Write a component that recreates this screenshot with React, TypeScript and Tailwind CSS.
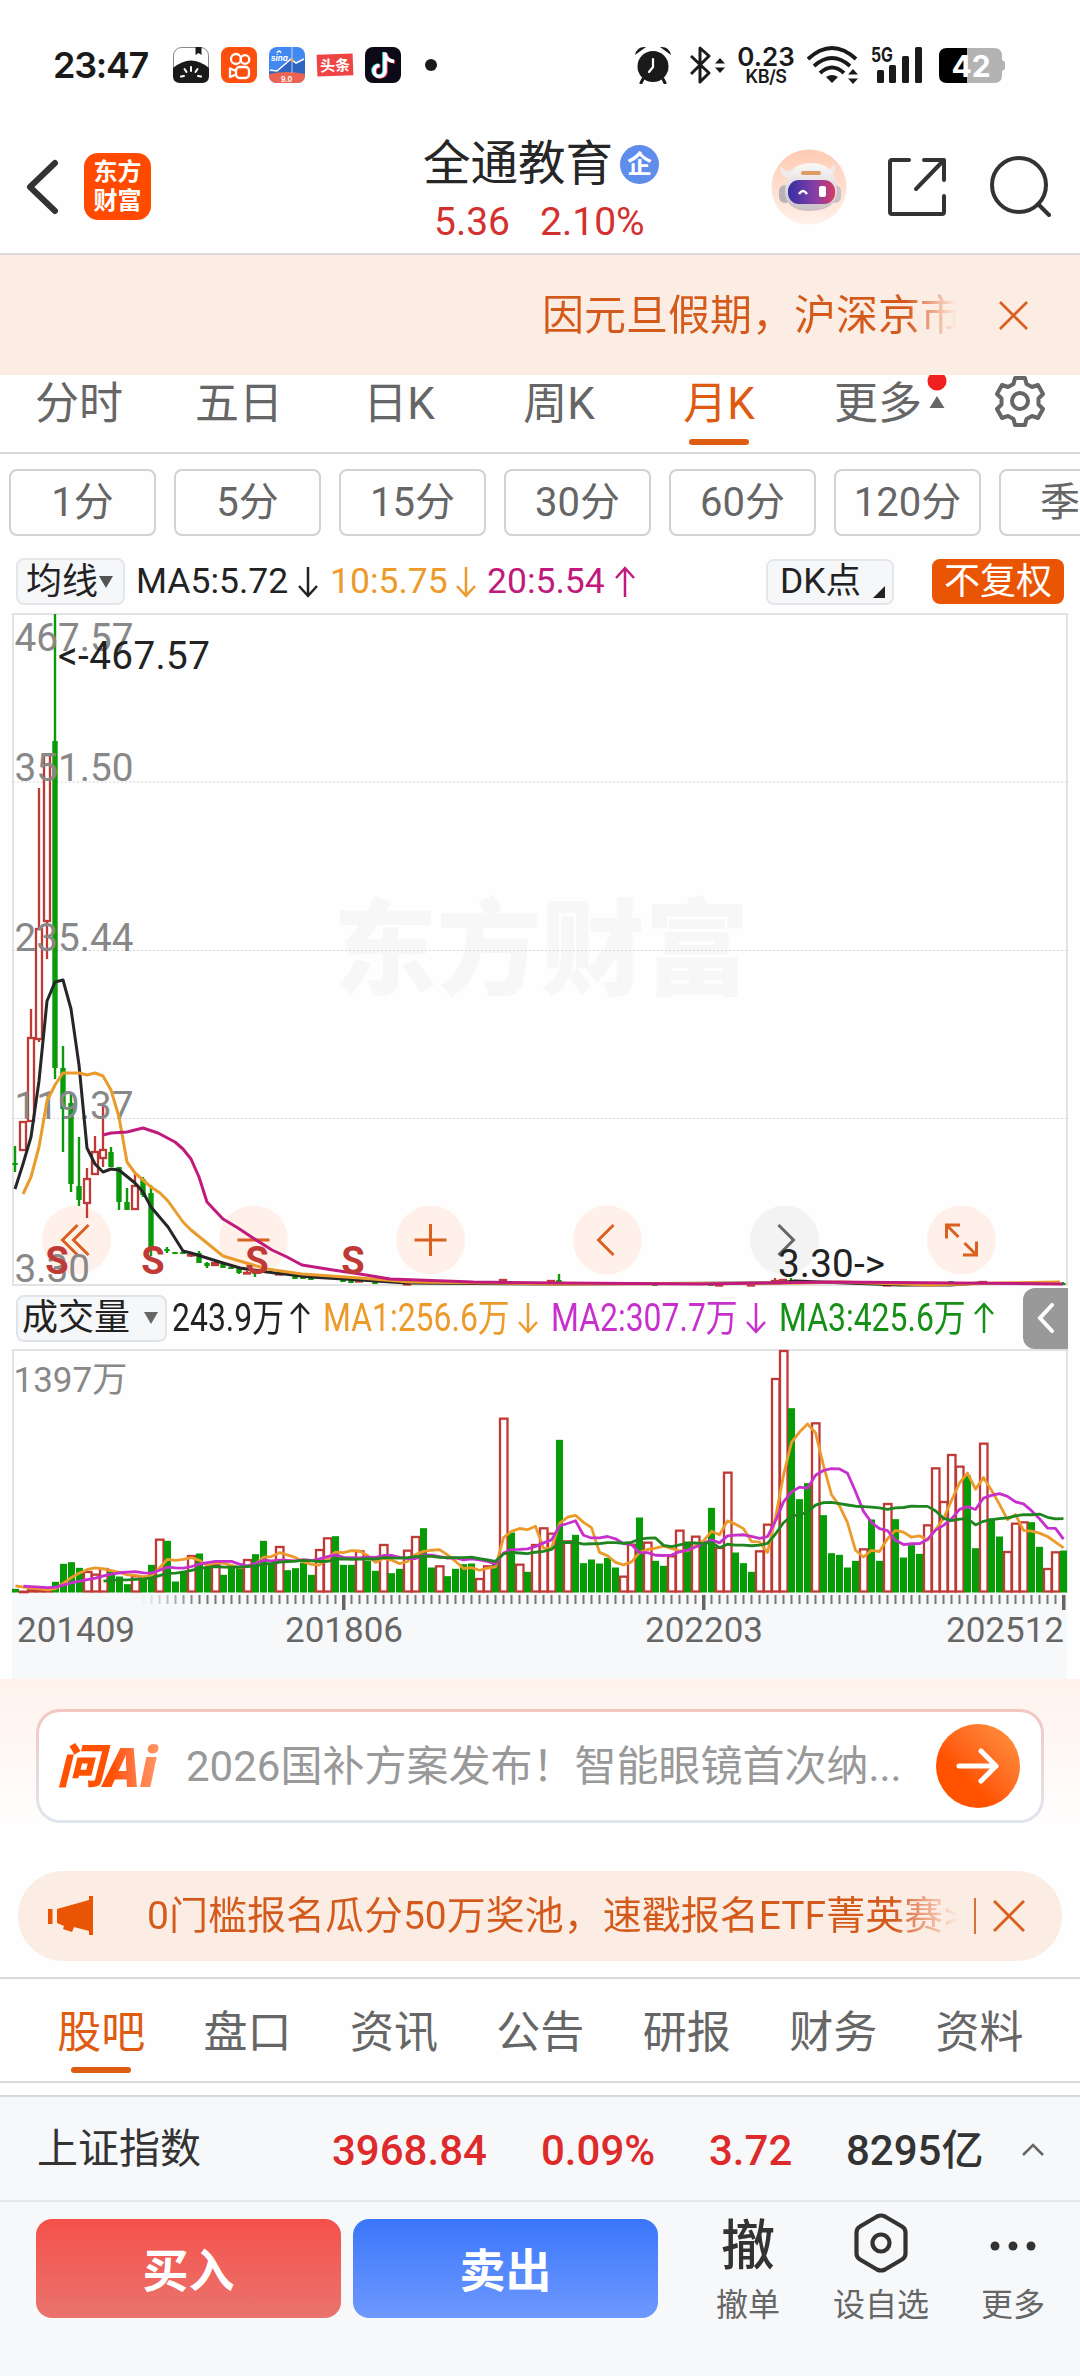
import type { ReactNode } from "react"
import clsx from "clsx"

const PERIODS = ["分时", "五日", "日K", "周K", "月K"]
const MINUTES = ["1分", "5分", "15分", "30分", "60分", "120分", "季K"]
const SECTIONS = ["股吧", "盘口", "资讯", "公告", "研报", "财务", "资料"]

const UP = "#bf3a37"
const DOWN = "#0a9a0a"

// x, high, low, body top, body bottom, rising
const CANDLES: [number, number, number, number, number, boolean][] = [
  [15, 1145, 1171, 1162, 1164, false],
  [23, 1120, 1150, 1120, 1150, true],
  [31, 1008, 1121, 1036, 1121, true],
  [39, 787, 1041, 927, 1039, true],
  [47, 753, 958, 753, 921, true],
  [55, 613, 1078, 740, 1067, false],
  [63, 1045, 1151, 1067, 1108, false],
  [71, 1092, 1191, 1102, 1183, false],
  [79, 1136, 1205, 1185, 1199, false],
  [87, 1167, 1217, 1177, 1203, true],
  [95, 1135, 1174, 1150, 1174, true],
  [103, 1105, 1166, 1148, 1158, true],
  [111, 1146, 1166, 1151, 1166, false],
  [119, 1166, 1209, 1166, 1201, false],
  [127, 1187, 1209, 1201, 1209, false],
  [135, 1173, 1209, 1184, 1209, true],
  [143, 1176, 1196, 1178, 1194, false],
  [151, 1184, 1255, 1192, 1247, false],
  [167, 1246, 1252, 1248, 1250, false],
  [175, 1251, 1253, 1251, 1253, false],
  [183, 1251, 1253, 1251, 1253, false],
  [191, 1253, 1256, 1253, 1255, true],
  [199, 1250, 1262, 1252, 1262, false],
  [207, 1261, 1267, 1262, 1265, false],
  [215, 1261, 1265, 1261, 1265, true],
  [223, 1263, 1267, 1263, 1267, false],
  [231, 1266, 1268, 1266, 1268, false],
  [239, 1268, 1273, 1268, 1272, false],
  [247, 1270, 1273, 1271, 1273, true],
  [255, 1271, 1276, 1271, 1273, false],
  [279, 1272, 1274, 1272, 1274, true],
  [295, 1275, 1278, 1275, 1278, false],
  [303, 1276, 1278, 1276, 1278, false],
  [311, 1277, 1279, 1277, 1279, false],
  [343, 1279, 1281, 1279, 1281, false],
  [351, 1279, 1282, 1280, 1282, false],
  [359, 1279, 1281, 1279, 1281, true],
  [375, 1281, 1283, 1281, 1283, false],
  [407, 1282, 1284, 1282, 1284, true],
  [503, 1278, 1281, 1278, 1281, true],
  [551, 1279, 1281, 1279, 1281, true],
  [559, 1273, 1281, 1279, 1281, false],
  [655, 1283, 1285, 1283, 1285, false],
  [711, 1283, 1285, 1283, 1285, false],
  [719, 1283, 1285, 1283, 1285, true],
  [751, 1283, 1285, 1283, 1285, true],
  [775, 1277, 1281, 1279, 1281, true],
  [783, 1278, 1280, 1278, 1280, true],
  [791, 1277, 1281, 1279, 1281, false],
  [887, 1283, 1285, 1283, 1285, true],
  [951, 1280, 1282, 1280, 1282, false],
  [983, 1280, 1282, 1280, 1282, true],
  [1063, 1281, 1284, 1282, 1284, false]
]

const MA5 =
  "15,1188 23,1163 31,1136 39,1080 47,1000 55,981 63,979 71,1008 79,1064 87,1147 95,1163 103,1171 111,1168 119,1169 135,1182 143,1191 151,1206 168,1226 183,1250 191,1252 207,1257 223,1262 240,1267 267,1271 310,1276 360,1279 407,1282 560,1283 780,1282 795,1280 820,1281 900,1284 950,1284 980,1282"
const MA10 =
  "23,1193 31,1176 39,1146 47,1100 55,1084 63,1072 79,1072 87,1074 95,1072 103,1075 111,1089 119,1116 127,1161 135,1172 151,1186 160,1192 168,1200 183,1221 191,1229 207,1242 223,1255 253,1264 267,1268 302,1273 360,1277 410,1281 560,1283 800,1282 840,1281 930,1284 1000,1282 1060,1281"
const MA20 =
  "103,1134 111,1132 127,1131 143,1127 158,1132 175,1141 183,1148 191,1158 199,1176 207,1201 223,1218 238,1227 253,1237 272,1249 287,1256 302,1264 333,1269 360,1273 390,1278 473,1281 560,1282 700,1283 830,1281 1063,1283"

// Monthly volume, negative where the month closed lower. 726 fills the plot.
const VOLUMES = [
  -11, 4, 8, 8, 8, -32, -86, -91, -74, 63, 55, 72, -63, -48, -25, 50, -50, -83, 160, -155, -33, -65,
  111, -117, -75, 83, -53, -80, -80, 99, -115, -155, -90, 138, -67, -73, -90, -53, 129, 164, -169,
  -83, -83, 125, -95, -65, 144, -58, -71, 127, 168, -193, -75, 80, -49, -71, -85, -87, 42, 80, -92,
  523, -180, 85, -62, 144, 194, 178, -458, 155, -173, -88, -99, -87, -104, -75, 49, 145, -225, 151,
  -95, -80, 110, 187, -153, 169, -155, -254, 135, 361, -120, -88, -62, 125, 205, 642, 726, -553,
  -280, -328, 509, -232, -118, -113, -75, -95, 131, -219, -95, 267, -220, -105, -142, -116, 203, 374,
  273, 414, 379, -351, -133, 448, -222, -168, 123, 208, 212, -211, -137, 72, 122, -126
]
const MONTH_PITCH = 8
const FIRST_MONTH_X = 15.5
const VOLUME_BASE = 1591.5

const monthX = (i: number) => FIRST_MONTH_X + i * MONTH_PITCH

function volumeAverage(days: number, from: number) {
  const padded = [...Array(20).fill(22), ...VOLUMES.map(Math.abs)]
  return VOLUMES.map((_, i) => {
    const slice = padded.slice(i + 21 - days, i + 21)
    const avg = slice.reduce((a, b) => a + b, 0) / days
    return `${monthX(i)},${VOLUME_BASE - avg / 3}`
  })
    .slice(from)
    .join(" ")
}

function Arrow({ up, className }: { up?: boolean; className?: string }) {
  return (
    <svg viewBox="0 0 20 32" className={clsx("h-8 w-5 shrink-0", className)} fill="none" stroke="currentColor" strokeWidth="2.5">
      <path d={up ? "M10 31V2M1 12l9-10 9 10" : "M10 1v29M1 20l9 10 9-10"} />
    </svg>
  )
}

function Close({ className }: { className?: string }) {
  return (
    <svg viewBox="0 0 30 30" className={className} fill="none" stroke="#d9601f" strokeWidth="2.8">
      <path d="M1 1l28 28M29 1L1 29" />
    </svg>
  )
}

function StatusBar() {
  return (
    <div className="flex h-[130px] items-center pl-[53px] font-['Inter','Noto_Sans_CJK_SC',sans-serif] text-[#1a1a1a]">
      <span className="w-[120px] text-[36px] leading-none font-semibold tracking-[-1.3px]">23:47</span>
      <div className="flex gap-3">
        <svg viewBox="0 0 36 36" className="size-9">
          <rect x=".5" y=".5" width="35" height="35" rx="8" fill="#fff" stroke="#555" strokeWidth=".7" />
          <path d="M0 21Q18 6 36 21v8q0 7-7 7H7q-7 0-7-7z" fill="#1a1a1a" />
          <path d="M22.500 0h6v8l-3-2-3 2z" fill="#1a1a1a" />
          <path d="M18 20v4M11.500 22l2 3M24.500 22l-2 3M8 29.500l3-.5M28 29.500l-3-.5" stroke="#fff" strokeWidth="2" strokeLinecap="round" />
        </svg>
        <svg viewBox="0 0 36 36" className="size-9">
          <rect width="36" height="36" rx="8" fill="#fd4f0d" />
          <g fill="none" stroke="#fff" strokeWidth="2.300">
            <circle cx="15" cy="12" r="5" />
            <circle cx="24" cy="12.500" r="4.300" />
            <rect x="15" y="20" width="13" height="11" rx="3.500" />
            <path d="M15 24l-6-2.500v8.500l6-2.500" strokeLinejoin="round" />
          </g>
        </svg>
        <svg viewBox="0 0 36 36" className="size-9">
          <rect width="36" height="36" rx="8" fill="#4188f0" />
          <path d="M0 25l9-1 9-10 5 0 4 3 9-5v15H0z" fill="#2f65c0" />
          <path d="M0 27q18-4 36 0v1q0 8-8 8H8q-8 0-8-8z" fill="#ea6353" />
          <path d="M1 23l7 1L22 12l5 4 8-4" fill="none" stroke="#fff" strokeWidth="1.500" />
          <path d="M23 0v26" stroke="#e6ecf5" strokeWidth=".8" />
          <circle cx="23" cy="13" r="1.600" fill="#f5a030" />
          <path d="M8 6q2-4 4 0" fill="none" stroke="#fff" strokeWidth="1.300" />
          <text x="2" y="14" fontSize="8" fontWeight="700" fontStyle="italic" fill="#fff">sina</text>
          <text x="12" y="34.500" fontSize="7" fontWeight="700" fill="#fff">9.0</text>
        </svg>
        <span className="flex h-[22px] w-9 -rotate-2 items-center justify-center self-center bg-[#ef4444] text-[15px] leading-none font-bold text-white">
          头条
        </span>
        <svg viewBox="0 0 36 36" className="size-9">
          <rect width="36" height="36" rx="8" fill="#0b0a16" />
          <g fill="none" strokeWidth="3.600">
            <path d="M19 5v19a5.500 5.500 0 1 1-5.500-6M19 6q1 7 9 8" stroke="#27e8e4" />
            <path d="M21 6v19a5.500 5.500 0 1 1-5.500-6M21 7q1 7 9 8" stroke="#fb2f57" />
            <path d="M20 5.500v19a5.500 5.500 0 1 1-5.500-6M20 6.500q1 7 9 8" stroke="#fff" />
          </g>
        </svg>
      </div>
      <span className="ml-6 size-3 rounded-full bg-[#1a1a1a]" />
      <svg viewBox="0 0 36 38" className="ml-[198px] h-[38px] w-9" fill="#1a1a1a">
        <circle cx="18" cy="20.500" r="15.500" />
        <path d="M0 9Q2 0 11 1zM36 9Q34 0 25 1z" />
        <path d="M8 33l-2 4M28 33l2 4" stroke="#1a1a1a" strokeWidth="3" strokeLinecap="round" />
        <path d="M18 13v8l-4 5" fill="none" stroke="#fff" strokeWidth="2.200" strokeLinecap="round" />
      </svg>
      <svg viewBox="0 0 36 38" className="ml-[19px] h-[38px] w-9" fill="none" stroke="#1a1a1a" strokeWidth="3" strokeLinejoin="round">
        <path d="M1 10l18 17-9 9V2l9 8L1 28" />
        <path d="M30 12l5 5.500H25zM30 27l5-5.500H25z" fill="#1a1a1a" stroke="none" />
      </svg>
      <div className="ml-[11px] w-[58px] pt-0.5 text-center font-semibold">
        <div className="text-[26px] leading-[22px]">0.23</div>
        <div className="text-[18px] leading-[18px] tracking-[-.5px]">KB/S</div>
      </div>
      <svg viewBox="0 0 52 38" className="ml-3 h-[38px] w-[52px]" fill="none" stroke="#1a1a1a" strokeWidth="3.800">
        <path d="M1 13Q25-9 49 13M7 20Q25 4 43 20M13 27Q25 16 37 27" />
        <path d="M19 31q6-4 12 0l-6 6z" fill="#1a1a1a" stroke="none" />
        <path d="M46 23l5 5.500H41zM46 38l5-5.500H41z" fill="#1a1a1a" stroke="none" />
      </svg>
      <svg viewBox="0 0 52 38" className="ml-[12px] h-[38px] w-[52px]" fill="#1a1a1a">
        <text x="0" y="16" fontSize="20" fontWeight="700" textLength="22" lengthAdjust="spacingAndGlyphs">5G</text>
        <rect x="6" y="24" width="7" height="13" rx="1.500" />
        <rect x="18" y="19" width="7" height="18" rx="1.500" />
        <rect x="31" y="10" width="7" height="27" rx="1.500" />
        <rect x="44" y="1" width="7" height="36" rx="1.500" />
      </svg>
      <svg viewBox="0 0 66 35" className="ml-4 h-[35px] w-[66px]">
        <path d="M28 0h27q8 0 8 8v4l3 2v7l-3 2v4q0 8-8 8H28z" fill="#b3b3b3" />
        <path d="M28 0H8Q0 0 0 8v19q0 8 8 8h20z" fill="#000" />
        <text x="32" y="28.500" fontSize="30" fontWeight="700" fill="#fff" textAnchor="middle">42</text>
      </svg>
    </div>
  )
}

function Header() {
  return (
    <header className="flex h-[125px] items-center border-b-2 border-[#d8d8da] pb-2.5 pl-[26px]">
      <svg viewBox="0 0 34 56" className="h-14 w-[34px]" fill="none" stroke="#333" strokeWidth="6" strokeLinecap="round" strokeLinejoin="round">
        <path d="M29 4L4 28l25 24" />
      </svg>
      <div className="ml-6 flex size-[67px] flex-col items-center justify-center rounded-[14px] bg-[#ff4a00] text-[24px] leading-[29px] font-bold text-white">
        <span>东方</span>
        <span>财富</span>
      </div>
      <div className="ml-[272px] w-[236px] pt-[13px]">
        <div className="flex items-center">
          <h1 className="text-[47.500px] leading-[58px] text-[#262626]">全通教育</h1>
          <span className="ml-[7px] flex size-[39px] items-center justify-center rounded-full bg-[#5f8deb] text-[25px] leading-none font-bold text-white">企</span>
        </div>
        <div className="flex gap-[30px] pl-[11px] text-[39px] leading-[58px] text-[#d3312f]">
          <span>5.36</span>
          <span>2.10%</span>
        </div>
      </div>
      <svg viewBox="0 0 76 76" className="ml-[112px] size-[76px]">
        <defs>
          <linearGradient id="halo" x2="0" y2="1">
            <stop stopColor="#ffcbb2" />
            <stop offset="1" stopColor="#fff1ea" />
          </linearGradient>
          <linearGradient id="visor">
            <stop stopColor="#3430a5" />
            <stop offset=".6" stopColor="#8a3fa5" />
            <stop offset="1" stopColor="#d93862" />
          </linearGradient>
          <linearGradient id="helmet" x2="0" y2="1">
            <stop stopColor="#fbf8f8" />
            <stop offset="1" stopColor="#c9c0c4" />
          </linearGradient>
        </defs>
        <circle cx="38" cy="38" r="37.500" fill="url(#halo)" />
        <path d="M18 29Q7 27 10 16q2 7 12 6zM58 27q9-3 5-13-2 7-10 7z" fill="#f0e9ea" />
        <rect x="8" y="36" width="12" height="18" rx="6" fill="#b9b2b6" />
        <rect x="58" y="36" width="12" height="18" rx="6" fill="#c7c0c4" />
        <path d="M14 42Q15 14 40 14t26 27q1 20-27 21-25 0-25-20z" fill="url(#helmet)" />
        <rect x="30" y="22" width="20" height="4" rx="2" fill="#dd9a66" />
        <rect x="17" y="31" width="47" height="24" rx="11" fill="url(#visor)" />
        <path d="M28 45q4-6 8 0" fill="none" stroke="#fff" strokeWidth="2.500" />
        <rect x="48" y="37" width="7" height="11" rx="2" fill="#fff" />
      </svg>
      <svg viewBox="0 0 60 60" className="ml-10 size-[60px]" fill="none" stroke="#333" strokeWidth="4" strokeLinecap="round" strokeLinejoin="round">
        <path d="M22 3H5Q3 3 3 5v50q0 2 2 2h50q2 0 2-2V39M37 3h20v20M57 3L29 32" />
      </svg>
      <svg viewBox="0 0 62 62" className="ml-[42px] size-[62px]" fill="none" stroke="#333" strokeWidth="4" strokeLinecap="round">
        <circle cx="30" cy="29" r="27" />
        <path d="M49 48l11 11" />
      </svg>
    </header>
  )
}

function Notice() {
  return (
    <div className="flex h-[120px] items-center bg-[#fcede4] pl-[542px] text-[#d45a1c]">
      <div className="w-[415px] overflow-hidden bg-linear-to-r from-[#d45a1c] from-88% to-[#fcede4] to-100% bg-clip-text text-[42px] whitespace-nowrap text-transparent">
        因元旦假期，沪深京市
      </div>
      <Close className="ml-[42px] size-[29px]" />
    </div>
  )
}

function PeriodTabs() {
  return (
    <nav className="-ml-px flex h-[79px] border-b-2 border-[#d8d8da] text-[44px] leading-[58px] text-[#666]">
      {PERIODS.map((name) => (
        <div key={name} className={clsx("flex w-40 flex-col items-center", name === "月K" && "text-[#de5b12]")}>
          <span>{name}</span>
          {name === "月K" && <span className="mt-1.5 h-1.5 w-[60px] rounded-full bg-[#de5b12]" />}
        </div>
      ))}
      <span className="ml-[35px]">更多</span>
      <svg viewBox="0 0 20 40" className="ml-[5px] h-10 w-5">
        <circle cx="10" cy="6" r="9.500" fill="#f0201f" />
        <path d="M10 21l7.500 12h-15z" fill="#666" />
      </svg>
      <svg viewBox="0 0 52 52" className="ml-[47px] size-[52px]" fill="none" stroke="#666" strokeWidth="4" strokeLinejoin="round">
        <path d="M21 3h10l1.500 6 5.500 3 6-2 5 9-4.500 4.500v6L49 34l-5 9-6-2-5.500 3-1.500 6H21l-1.500-6-5.500-3-6 2-5-9 4.500-4.500v-6L3 19l5-9 6 2 5.500-3z" />
        <circle cx="26" cy="26" r="8" />
      </svg>
    </nav>
  )
}

function MinuteChips() {
  return (
    <div className="flex gap-[18px] overflow-hidden pt-[15px] pl-[9px]">
      {MINUTES.map((name) => (
        <span
          key={name}
          className="flex h-[67px] w-[147px] shrink-0 items-center justify-center rounded-lg border-2 border-[#d2d2d4] text-[40px] text-[#666]"
        >
          {name}
        </span>
      ))}
    </div>
  )
}

function AverageRow() {
  return (
    <div className="flex h-[77px] items-center pt-[14px] pl-4 text-[35.500px] text-[#222]">
      <span className="flex h-[47px] w-[109px] items-center rounded-lg border-2 border-[#e4e6ea] bg-[#f6f7f9] pl-2 text-[36px]">
        均线
        <svg viewBox="0 0 16 14" className="h-3.5 w-4">
          <path d="M1 1h14L8 13z" fill="#555" />
        </svg>
      </span>
      <span className="ml-[11px] w-[162px]">MA5:5.72</span>
      <Arrow />
      <span className="ml-[12px] w-[126px] text-[#ec9a29]">10:5.75</span>
      <Arrow className="text-[#ec9a29]" />
      <span className="ml-[11px] w-[128px] text-[#c01b7c]">20:5.54</span>
      <Arrow up className="text-[#c01b7c]" />
      <span className="ml-[131px] flex h-[46px] w-[128px] items-center rounded-lg border-2 border-[#e4e6ea] bg-[#f6f7f9] pl-3">
        DK点
        <svg viewBox="0 0 12 12" className="mt-5 ml-3 size-3">
          <path d="M12 0v12H0z" fill="#222" />
        </svg>
      </span>
      <span className="ml-[38px] flex h-[45px] w-[132px] items-center justify-center rounded-lg bg-[#ea5504] text-[36px] text-white">不复权</span>
    </div>
  )
}

function ChartButton({ x, muted, children }: { x: number; muted?: boolean; children: ReactNode }) {
  return (
    <g transform={`translate(${x} 1239)`} fill="none" stroke={muted ? "#666" : "#d9601f"} strokeWidth="3">
      <circle r="34.500" fill={muted ? "#f3f3f3" : "#fff0e9"} stroke="none" />
      {children}
    </g>
  )
}

function PriceChart() {
  return (
    <svg viewBox="12 612 1056 674" className="mx-3 h-[674px] w-[1056px]">
      <text x="541" y="986" fontSize="104" fontWeight="900" fill="#f7f7f7" textAnchor="middle">东方财富</text>
      <rect x="13" y="613" width="1054" height="671" fill="none" stroke="#e2e2e2" strokeWidth="2" />
      {[781, 949.5, 1117.5].map((y) => (
        <path key={y} d={`M13 ${y}H1067`} stroke="#d4d4d4" strokeWidth="1" strokeDasharray="2 2" />
      ))}
      <ChartButton x={76.5}>
        <path d="M1-15l-15 15 15 15M12-15l-15 15 15 15" />
      </ChartButton>
      <ChartButton x={253.5}>
        <path d="M-16 0h32" />
      </ChartButton>
      <ChartButton x={430.5}>
        <path d="M-16 0h32M0-16v32" />
      </ChartButton>
      <ChartButton x={607.5}>
        <path d="M6-15L-9 0 6 15" />
      </ChartButton>
      <ChartButton x={784.5} muted>
        <path d="M-6-15L9 0-6 15" />
      </ChartButton>
      <ChartButton x={961.5}>
        <path d="M-1.500-15H-15v13.500M-14-14l11 11M1.500 15H15V1.500M14 14L3 3" />
      </ChartButton>
      {CANDLES.map(([x, high, low, top, bottom, rising]) =>
        rising ? (
          <g key={x} stroke={UP} strokeWidth="2.300" fill="#fff">
            <path d={`M${x} ${high}V${low}`} />
            <rect x={x - 3} y={top + 1} width="6" height={Math.max(bottom - top - 2, 0.5)} />
          </g>
        ) : (
          <g key={x} fill={DOWN}>
            <rect x={x - 1.2} y={high} width="2.400" height={low - high} />
            <rect x={x - 2.7} y={top} width="5.400" height={bottom - top} />
          </g>
        )
      )}
      <g fontSize="38.700" fill="#888">
        <text x="14.500" y="650">467.57</text>
        <text x="14.500" y="780">351.50</text>
        <text x="14.500" y="949.500">235.44</text>
        <text x="14.500" y="1117.500">119.37</text>
        <text x="14.500" y="1281">3.30</text>
      </g>
      <g fill="none" strokeWidth="3" strokeLinejoin="round">
        <polyline points={MA5} stroke="#262626" />
        <polyline points={MA10} stroke="#e99b2b" />
        <polyline points={MA20} stroke="#c01b7c" />
      </g>
      <g fontSize="38" fontWeight="700" fill={UP} textAnchor="middle">
        <text x="57" y="1273">S</text>
        <text x="153" y="1273">S</text>
        <text x="257" y="1273">S</text>
        <text x="353" y="1273">S</text>
      </g>
      <g fontSize="38.700" fill="#222">
        <text x="58" y="668" textLength="152">&lt;-467.57</text>
        <text x="778" y="1276" textLength="107">3.30-&gt;</text>
      </g>
    </svg>
  )
}

function VolumeStat({ className, text, up }: { className: string; text: string; up?: boolean }) {
  return (
    <div className={clsx("flex items-center", className)}>
      <span className="min-w-0 flex-1">
        <span className="inline-block origin-left scale-x-[.84] whitespace-nowrap">{text}</span>
      </span>
      <Arrow up={up} />
    </div>
  )
}

function VolumeRow() {
  return (
    <div className="flex h-[62px] items-center pl-4 text-[38px]">
      <span className="flex h-[47px] w-[151px] shrink-0 items-center rounded-lg border-2 border-[#e0e3e8] bg-[#f6f7f9] pl-1 text-[36px] text-[#222]">
        成交量
        <svg viewBox="0 0 16 14" className="ml-[13px] h-3.5 w-4">
          <path d="M1 1h14L8 13z" fill="#666" />
        </svg>
      </span>
      <VolumeStat className="ml-[5px] w-[138px] text-[#222]" text="243.9万" up />
      <VolumeStat className="ml-[13px] w-[215px] text-[#ec9a29]" text="MA1:256.6万" />
      <VolumeStat className="ml-[13px] w-[215px] text-[#c730cc]" text="MA2:307.7万" />
      <VolumeStat className="ml-[13px] w-[215px] text-[#168f16]" text="MA3:425.6万" up />
      <span className="ml-[29px] flex h-[61px] w-[45px] items-center justify-center rounded-l-xl bg-[#999]">
        <svg viewBox="0 0 18 30" className="h-[30px] w-[18px]" fill="none" stroke="#fff" strokeWidth="4" strokeLinecap="round">
          <path d="M15 2L3 15l12 13" />
        </svg>
      </span>
    </div>
  )
}

function VolumeChart() {
  return (
    <svg viewBox="12 1348 1056 330" className="mx-3 h-[330px] w-[1056px]">
      <defs>
        <linearGradient id="tickFade" gradientUnits="userSpaceOnUse" x1="140" x2="200" y1="0" y2="0">
          <stop stopColor="#777" stopOpacity="0" />
          <stop offset="1" stopColor="#777" />
        </linearGradient>
      </defs>
      <rect x="12" y="1592" width="1055" height="86" fill="#f7f8fa" />
      <path d="M13 1592V1349H1067V1592" fill="none" stroke="#e2e2e2" strokeWidth="2" />
      <text x="13.500" y="1391" fontSize="35" fill="#888">1397万</text>
      {VOLUMES.map((v, i) => {
        const h = Math.abs(v) / 3
        const x = monthX(i)
        return v > 0 ? (
          <rect key={i} x={x - 3.5} y={VOLUME_BASE - h + 0.5} width="7.500" height={Math.max(h - 1.5, 0.5)} fill="#fff" stroke={UP} strokeWidth="2.300" />
        ) : (
          <rect key={i} x={x - 3.5} y={VOLUME_BASE - h} width="7" height={h} fill="#069c06" />
        )
      })}
      <g fill="none" strokeWidth="2.800" strokeLinejoin="round">
        <polyline points={volumeAverage(5, 0)} stroke="#ec9a29" />
        <polyline points={volumeAverage(10, 1)} stroke="#c730cc" />
        <polyline points={volumeAverage(20, 11)} stroke="#1f861f" />
      </g>
      {VOLUMES.map((_, i) => i > 15 && <rect key={i} x={monthX(i) - 1} y="1594" width="2" height="9" fill="url(#tickFade)" />)}
      {[41, 86, 131].map((i) => (
        <rect key={i} x={monthX(i) - 1.5} y="1594" width="3.500" height="15" fill="#666" />
      ))}
      <g fontSize="35" fill="#666">
        <text x="17" y="1641">201409</text>
        <text x="344" y="1641" textAnchor="middle">201806</text>
        <text x="704" y="1641" textAnchor="middle">202203</text>
        <text x="1064" y="1641" textAnchor="end">202512</text>
      </g>
    </svg>
  )
}

function AskAi() {
  return (
    <div className="h-[192px] bg-linear-to-b from-[#fff2ed] to-white to-85% px-9 pt-[30px]">
      <div className="h-[114px] rounded-[24px] bg-linear-to-b from-[#f2c7c0] to-[#dfe6f0] p-[3px]">
        <div className="flex h-full items-center rounded-[21px] bg-white pl-[20px]">
          <div className="flex h-[52px] w-[108px] items-center bg-linear-to-r from-[#ff5200] from-50% to-[#ffa070] bg-clip-text leading-none font-black whitespace-nowrap text-transparent italic">
            <span className="-ml-0.5 inline-block w-[47px] text-[47px] tracking-[-1px]">问</span>
            <span className="font-['Open_Sans',sans-serif] text-[54px] font-extrabold tracking-[-1px]">Ai</span>
          </div>
          <span className="ml-[19px] w-[712px] text-[42px] whitespace-nowrap text-[#999]">2026国补方案发布！智能眼镜首次纳...</span>
          <span className="ml-[38px] flex size-[84px] items-center justify-center rounded-full bg-linear-to-bl from-[#ff9440] to-[#ff5200] to-65%">
            <svg viewBox="0 0 44 36" className="h-9 w-11" fill="none" stroke="#fff" strokeWidth="5" strokeLinecap="round" strokeLinejoin="round">
              <path d="M3 18h37M25 3l15 15-15 15" />
            </svg>
          </span>
        </div>
      </div>
    </div>
  )
}

function Campaign() {
  return (
    <div className="mx-[18px] flex h-[90px] items-center rounded-full bg-[#fcede4] pl-[30px]">
      <svg viewBox="0 0 46 40" className="h-10 w-[46px]" fill="#ea5504">
        <path d="M0 13h4.500v15H0zM9 13L41 4V0h4v39h-4v-4l-15-4-2 5-9-3 1-3-7-3z" />
      </svg>
      <div className="ml-[53px] w-[812px] overflow-hidden bg-linear-to-r from-[#d45a1c] from-92% to-[#fcede4] bg-clip-text text-[39px] whitespace-nowrap text-transparent">
        0门槛报名瓜分50万奖池，速戳报名ETF菁英赛&gt;
      </div>
      <span className="ml-[15px] h-9 w-[2px] bg-[#d9713a]" />
      <Close className="ml-[17px] size-8" />
    </div>
  )
}

function SectionTabs() {
  return (
    <nav className="mt-4 flex h-[106px] border-y-2 border-[#d8d8da] pt-[26px] pl-[28px] text-[44px] leading-[56px] text-[#666]">
      {SECTIONS.map((name, i) => (
        <div key={name} className={clsx("flex w-[146.4px] flex-col items-center", i === 0 && "text-[#de5b12]")}>
          <span>{name}</span>
          {i === 0 && <span className="mt-[6px] h-1.5 w-[60px] shrink-0 rounded-full bg-[#de5b12]" />}
        </div>
      ))}
    </nav>
  )
}

function IndexRow() {
  return (
    <div className="flex h-[105px] items-center border-b-2 border-[#e6e8ea] pt-[3px] pl-[37px] text-[42px] font-medium text-[#dd2a2a]">
      <span className="w-[295px] text-[41px] font-normal text-[#333]">上证指数</span>
      <span className="w-[209px]">3968.84</span>
      <span className="w-[168px]">0.09%</span>
      <span className="w-[137px]">3.72</span>
      <span className="w-[175px] text-[#333]">8295亿</span>
      <svg viewBox="0 0 24 14" className="h-3.5 w-6" fill="none" stroke="#666" strokeWidth="2.500">
        <path d="M2 12L12 2l10 10" />
      </svg>
    </div>
  )
}

function Action({ className, label, children }: { className: string; label: string; children: ReactNode }) {
  return (
    <div className={clsx("flex flex-col items-center text-[32px] leading-10 text-[#666]", className)}>
      <div className="flex h-[68px] items-center justify-center text-[#333]">{children}</div>
      <span className="mt-2">{label}</span>
    </div>
  )
}

function TradeBar() {
  return (
    <div className="flex pt-[17px] pl-9">
      <button className="h-[99px] w-[305px] rounded-2xl bg-linear-to-b from-[#f4504a] to-[#ea736d] pt-1.5 text-[46px] font-bold text-white">买入</button>
      <button className="ml-3 h-[99px] w-[305px] rounded-2xl bg-linear-to-b from-[#3a76f9] to-[#6d98ff] pt-1.5 text-[46px] font-bold text-white">卖出</button>
      <div className="-mt-2.5 flex">
        <Action className="ml-[40px] w-[100px]" label="撤单">
          <span className="pt-2 text-[54px] font-medium">撤</span>
        </Action>
        <Action className="ml-[33px] w-[100px]" label="设自选">
          <svg viewBox="0 0 54 60" className="h-[60px] w-[54px]" fill="none" stroke="#333" strokeWidth="4.200">
            <path d="M23 3.500q4-2 8 0l17 10q3.500 2 3.500 6v21q0 4-3.500 6l-17 10q-4 2-8 0l-17-10q-3.500-2-3.500-6v-21q0-4 3.500-6z" />
            <circle cx="27" cy="30" r="8.500" />
          </svg>
        </Action>
        <Action className="ml-[32px] w-[100px]" label="更多">
          <svg viewBox="0 0 46 12" className="mt-1.5 h-3 w-[46px]" fill="#333">
            <circle cx="5" cy="6" r="4.500" />
            <circle cx="23" cy="6" r="4.500" />
            <circle cx="41" cy="6" r="4.500" />
          </svg>
        </Action>
      </div>
    </div>
  )
}

export default function App() {
  return (
    <div className="flex h-[2376px] w-[1080px] flex-col overflow-hidden bg-[#fefefe] font-['Roboto','Noto_Sans_CJK_SC',sans-serif]">
      <StatusBar />
      <Header />
      <Notice />
      <PeriodTabs />
      <MinuteChips />
      <AverageRow />
      <PriceChart />
      <VolumeRow />
      <VolumeChart />
      <AskAi />
      <Campaign />
      <SectionTabs />
      <footer className="mt-3 flex-1 border-t-2 border-[#d8d8da] bg-[#f7f8fa]">
        <IndexRow />
        <TradeBar />
      </footer>
    </div>
  )
}
